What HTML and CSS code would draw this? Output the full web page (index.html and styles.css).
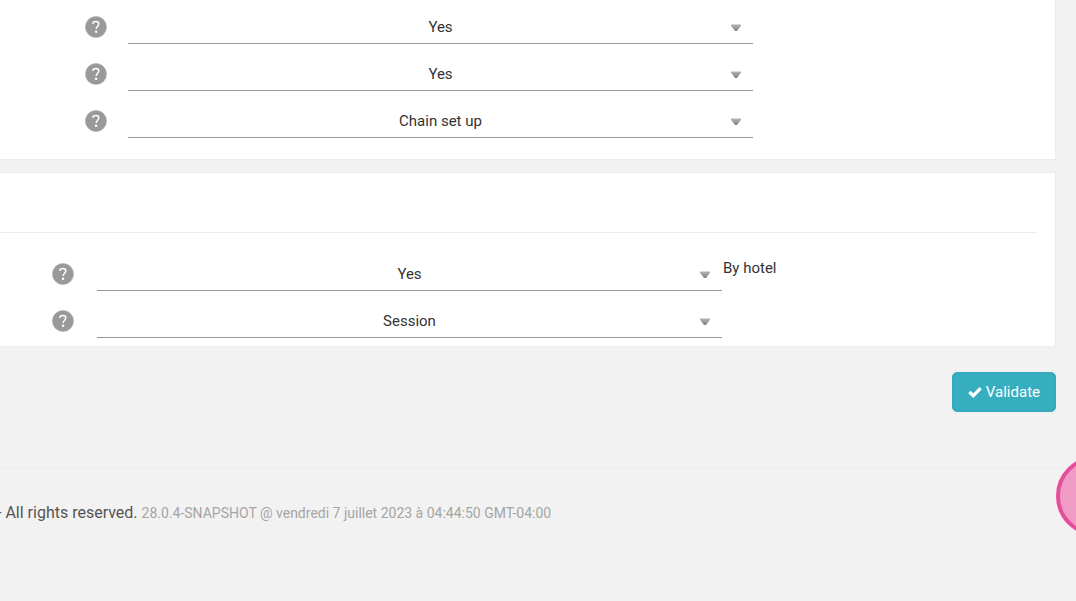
FILE: index.html
```html
<!DOCTYPE html>
<html lang="en">
<head>
    <meta charset="UTF-8">
    <meta name="viewport" content="width=device-width, initial-scale=1.0">
    <title>Settings</title>
    <link rel="stylesheet" href="styles.css">
</head>
<body>
    <svg class="sprite" aria-hidden="true">
        <defs>
            <linearGradient id="arrow-fill" x1="0" y1="0" x2="0" y2="1">
                <stop offset="0" stop-color="#b4b4b4"/>
                <stop offset="1" stop-color="#808080"/>
            </linearGradient>
        </defs>
        <symbol id="icon-help" viewBox="0 0 22 22">
            <circle cx="11" cy="11" r="10.6" fill="#999" stroke="#b5b5b5" stroke-width="0.6"/>
            <path d="M8.1 8V6.3C9 5.7 9.9 5.5 10.9 5.5C12.8 5.5 13.8 6.4 13.8 7.8C13.8 10.2 11.2 10.3 11.2 13.1" fill="none" stroke="#fff" stroke-width="1.5"/>
            <circle cx="11.1" cy="15.7" r="1.2" fill="#fff"/>
        </symbol>
        <symbol id="icon-arrow" viewBox="0 0 10 7">
            <path d="M0 0.5H10V1.8L6 7H4L0 1.8Z" fill="url(#arrow-fill)"/>
        </symbol>
    </svg>

    <main class="content">
        <form id="settings-form">
            <section class="panel">
                <div class="field">
                    <svg class="help"><use href="#icon-help"/></svg>
                    <div class="select">
                        <select aria-label="Option 1"><option>Yes</option><option>No</option></select>
                        <svg class="arrow"><use href="#icon-arrow"/></svg>
                    </div>
                </div>
                <div class="field">
                    <svg class="help"><use href="#icon-help"/></svg>
                    <div class="select">
                        <select aria-label="Option 2"><option>Yes</option><option>No</option></select>
                        <svg class="arrow"><use href="#icon-arrow"/></svg>
                    </div>
                </div>
                <div class="field">
                    <svg class="help"><use href="#icon-help"/></svg>
                    <div class="select">
                        <select aria-label="Option 3"><option>Chain set up</option></select>
                        <svg class="arrow"><use href="#icon-arrow"/></svg>
                    </div>
                </div>
            </section>

            <section class="panel panel-titled">
                <div class="panel-heading"></div>
                <div class="field">
                    <svg class="help"><use href="#icon-help"/></svg>
                    <div class="select">
                        <select id="by-hotel"><option>Yes</option><option>No</option></select>
                        <svg class="arrow"><use href="#icon-arrow"/></svg>
                    </div>
                    <label class="suffix" for="by-hotel">By hotel</label>
                </div>
                <div class="field">
                    <svg class="help"><use href="#icon-help"/></svg>
                    <div class="select">
                        <select aria-label="Scope"><option>Session</option></select>
                        <svg class="arrow"><use href="#icon-arrow"/></svg>
                    </div>
                </div>
            </section>

            <div class="actions">
                <button type="submit" class="btn">
                    <svg class="check" viewBox="0 0 14 12"><path d="M1.4 6L5.3 9.7L12.7 2.2" fill="none" stroke="#fff" stroke-width="3.2"/></svg>
                    Validate
                </button>
            </div>
        </form>
    </main>

    <footer class="footer">
        - All rights reserved. <small>28.0.4-SNAPSHOT @ vendredi 7 juillet 2023 à 04:44:50 GMT-04:00</small>
    </footer>

    <div class="bubble-clip">
        <button type="button" class="bubble" aria-label="Help"></button>
    </div>
</body>
</html>
```

FILE: styles.css
```css
:root {
    --page: #f2f2f2;
    --line: #ececec;
    --text: #333;
    --accent: #37aebf;
    --pink: #e84d9b;
}

* {
    box-sizing: border-box;
}

body {
    position: relative;
    margin: 0;
    min-height: 100vh;
    background-color: var(--page);
    color: var(--text);
    font-family: Roboto, "Liberation Sans", sans-serif;
    font-size: 15px;
    line-height: 20px;
}

.sprite {
    position: absolute;
    width: 0;
    height: 0;
}

.content {
    padding-right: 20px;
}

.panel {
    margin-bottom: 12px;
    padding: 0 18px 21px 84px;
    background-color: #fff;
    border: 1px solid var(--line);
    border-width: 0 1px 1px 0;
}

.panel-titled {
    padding: 0 18px 8px 52px;
    border-top-width: 1px;
}

.panel-heading {
    height: 60px;
    margin-left: -52px;
    margin-bottom: 11px;
    border-bottom: 1px solid var(--line);
}

.field {
    display: flex;
    align-items: flex-end;
    height: 47px;
}

.panel:not(.panel-titled) .field:first-child {
    height: 44px;
}

.help {
    flex: none;
    width: 22px;
    height: 22px;
    margin: 0 21px 6px 1px;
}

.panel-titled .help {
    margin-left: 0;
    margin-right: 23px;
}

.select {
    position: relative;
    flex: 0 1 625px;
}

.select select {
    display: block;
    width: 100%;
    height: 34px;
    padding: 0 20px;
    border: 0;
    border-bottom: 1px solid #999;
    border-radius: 0;
    background: transparent;
    color: inherit;
    font: inherit;
    text-align: center;
    text-align-last: center;
    appearance: none;
}

.arrow {
    position: absolute;
    right: 12px;
    top: 14px;
    width: 10px;
    height: 7px;
    pointer-events: none;
}

.suffix {
    align-self: center;
    margin-left: 1px;
}

.actions {
    display: flex;
    justify-content: flex-end;
    padding: 13px 0 56px;
}

.btn {
    display: flex;
    align-items: center;
    gap: 4px;
    height: 40px;
    padding: 0 15px;
    border: 1px solid #35a8b8;
    border-radius: 5px;
    background-color: var(--accent);
    color: #fff;
    font: inherit;
}

.check {
    width: 14px;
    height: 12px;
}

.footer {
    padding: 32px 0;
    border-top: 1px solid var(--line);
    color: #555;
    font-size: 16px;
    line-height: 24px;
    text-indent: -3px;
    white-space: nowrap;
}

.footer small {
    color: #a5a5a5;
    font-size: 14px;
}

/* Chat bubble that peeks in from the right edge */
.bubble-clip {
    position: absolute;
    top: 456px;
    right: 0;
    width: 20px;
    height: 80px;
    overflow: hidden;
}

.bubble {
    width: 80px;
    height: 80px;
    padding: 0;
    border: 4px solid var(--pink);
    border-radius: 50%;
    background-color: #f09ac6;
}
```
